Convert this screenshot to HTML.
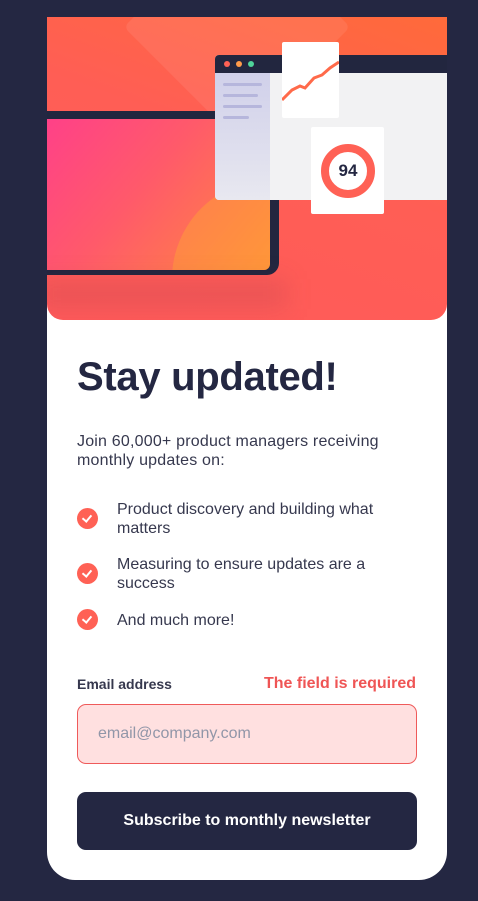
<!DOCTYPE html>
<html><head><meta charset="utf-8"><style>
*{margin:0;padding:0;box-sizing:border-box}
body{width:478px;height:901px;background:#242742;font-family:"Liberation Sans",sans-serif;position:relative;overflow:hidden}
.card{position:absolute;left:47px;top:17px;width:400px;height:863px;background:#fff;border-radius:0 0 28px 28px;overflow:hidden}
.hero{position:absolute;left:0;top:0;width:400px;height:303px;border-radius:0 0 16px 16px;overflow:hidden;background:linear-gradient(200deg,#ff6a3a 0%,#ff5e55 45%,#ff5a5a 100%)}
.abs{position:absolute}
h1{position:absolute;left:77px;top:355px;font-size:40px;font-weight:bold;color:#242742;letter-spacing:-0.3px}
.p{position:absolute;left:77px;top:432px;font-size:16px;line-height:19px;color:#36384e;width:330px;letter-spacing:0.2px}
.li{position:absolute;font-size:16px;line-height:19px;color:#36384e;width:290px}
.chk{position:absolute;left:77px;width:21px;height:21px;border-radius:50%;background:#ff6155}
.chk:after{content:"";position:absolute;left:7px;top:5px;width:4px;height:7px;border:solid #fff;border-width:0 2px 2px 0;transform:rotate(40deg)}
</style></head><body>
<div class="card">
 <div class="hero">
  <div class="abs" style="left:110px;top:-70px;width:160px;height:160px;background:rgba(255,255,255,0.08);transform:rotate(45deg);border-radius:6px"></div>
  <div class="abs" style="left:-10px;top:94px;width:242px;height:164px;background:#22263f;border-radius:0 0 12px 0"></div>
  <div class="abs" style="left:-10px;top:102px;width:233px;height:151px;background:linear-gradient(130deg,#ff3f8a 0%,#ff5a6a 45%,#ff8a3e 100%);border-radius:0 0 6px 0;overflow:hidden">
   <div class="abs" style="left:135px;top:60px;width:200px;height:200px;border-radius:50%;background:rgba(255,170,50,0.4)"></div>
  </div>
  <div class="abs" style="left:-10px;top:262px;width:250px;height:30px;background:rgba(120,40,70,0.15);filter:blur(12px)"></div>
  <div class="abs" style="left:168px;top:38px;width:240px;height:145px;background:#f2f2f3;border-radius:4px;overflow:hidden">
   <div class="abs" style="left:0;top:0;width:240px;height:18px;background:#22263f"></div>
   <div class="abs" style="left:9px;top:6px;width:6px;height:6px;border-radius:50%;background:#ff6155"></div>
   <div class="abs" style="left:21px;top:6px;width:6px;height:6px;border-radius:50%;background:#ff9a4a"></div>
   <div class="abs" style="left:33px;top:6px;width:6px;height:6px;border-radius:50%;background:#4fd39a"></div>
   <div class="abs" style="left:0;top:18px;width:55px;height:127px;background:linear-gradient(#d0d0ea,#e8e8f0)"></div>
   <div class="abs" style="left:8px;top:28px;width:39px;height:3px;border-radius:2px;background:#b6b6dc"></div>
   <div class="abs" style="left:8px;top:39px;width:35px;height:3px;border-radius:2px;background:#b6b6dc"></div>
   <div class="abs" style="left:8px;top:50px;width:39px;height:3px;border-radius:2px;background:#b6b6dc"></div>
   <div class="abs" style="left:8px;top:61px;width:26px;height:3px;border-radius:2px;background:#b6b6dc"></div>
  </div>
  <div class="abs" style="left:235px;top:25px;width:57px;height:76px;background:#fff;border-radius:2px">
   <svg width="57" height="76" style="position:absolute;left:0;top:0"><polyline points="0,58 10,48 18,44 23,46 32,36 40,33 48,26 57,20" fill="none" stroke="#ff6a4a" stroke-width="3"/></svg>
  </div>
  <div class="abs" style="left:264px;top:110px;width:73px;height:87px;background:#fff;border-radius:2px">
   <div class="abs" style="left:10px;top:17px;width:54px;height:54px;border-radius:50%;border:8px solid #ff6155"></div>
   <div class="abs" style="left:0;top:34px;width:74px;text-align:center;font-weight:bold;font-size:17px;color:#242742">94</div>
  </div>
 </div>
</div>
<h1>Stay updated!</h1>
<div class="p">Join 60,000+ product managers receiving monthly updates on:</div>
<div class="chk" style="top:508px"></div><div class="li" style="left:117px;top:500px">Product discovery and building what matters</div>
<div class="chk" style="top:563px"></div><div class="li" style="left:117px;top:555px">Measuring to ensure updates are a success</div>
<div class="chk" style="top:609px"></div><div class="li" style="left:117px;top:611px">And much more!</div>
<div class="abs" style="left:77px;top:676px;font-size:14px;font-weight:bold;color:#36384e">Email address</div>
<div class="abs" style="left:200px;width:216px;text-align:right;top:675px;font-size:16px;font-weight:bold;color:#ef5555">The field is required</div>
<div class="abs" style="left:77px;top:704px;width:340px;height:60px;border:1px solid #ef5a5a;border-radius:9px;background:#ffe0e0;padding:20px 0 0 20px;font-size:16px;color:#9196a8">email@company.com</div>
<div class="abs" style="left:77px;top:792px;width:340px;height:58px;border-radius:9px;background:#242742;color:#fff;font-weight:bold;font-size:16px;text-align:center;line-height:58px">Subscribe to monthly newsletter</div>
</body></html>
